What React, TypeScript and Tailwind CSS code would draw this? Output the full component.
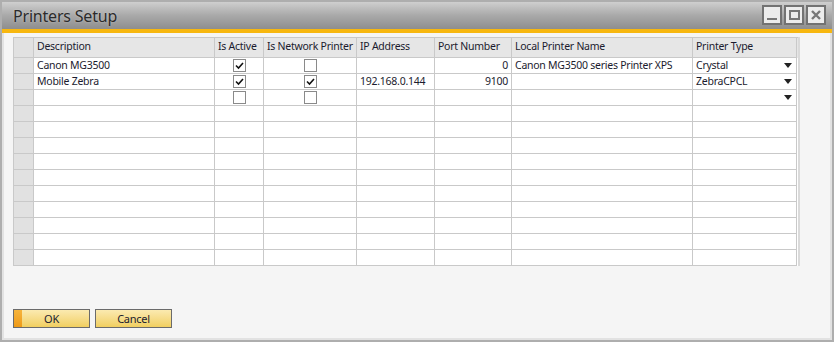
import React from "react";

type Row = {
  desc: string;
  active: boolean | null;
  network: boolean | null;
  ip: string;
  port: string;
  local: string;
  type: string;
  arrow: boolean;
};

const rows: Row[] = [
  { desc: "Canon MG3500", active: true, network: false, ip: "", port: "0", local: "Canon MG3500 series Printer XPS", type: "Crystal", arrow: true },
  { desc: "Mobile Zebra", active: true, network: true, ip: "192.168.0.144", port: "9100", local: "", type: "ZebraCPCL", arrow: true },
  { desc: "", active: false, network: false, ip: "", port: "", local: "", type: "", arrow: true },
];

const emptyRow: Row = { desc: "", active: null, network: null, ip: "", port: "", local: "", type: "", arrow: false };
const allRows: Row[] = [...rows, ...Array.from({ length: 10 }, () => emptyRow)];

const cols = "grid grid-cols-[20px_181px_49px_93px_78px_77px_181px_104px]";
const cell = "border-r border-b border-[#c9c9c9] h-4 leading-[15px] px-[3px] overflow-hidden whitespace-nowrap";

function Check({ on }: { on: boolean }) {
  return (
    <span className="inline-flex w-[13px] h-[13px] border border-[#8a8a8a] bg-white items-center justify-center align-middle">
      {on && (
        <svg width="9" height="8" viewBox="0 0 9 8">
          <path d="M1 3.5 L3.5 6 L8 1" fill="none" stroke="#111" strokeWidth="1.6" />
        </svg>
      )}
    </span>
  );
}

function Arrow() {
  return (
    <svg width="8" height="5" viewBox="0 0 8 5" className="shrink-0">
      <path d="M0 0 H8 L4 5 Z" fill="#222" />
    </svg>
  );
}

function WinBtn({ children }: { children: React.ReactNode }) {
  return (
    <div className="w-[20px] h-[20px] border-2 border-[#727272] bg-[#ececec] flex items-center justify-center">
      {children}
    </div>
  );
}

export default function App() {
  return (
    <div
      className="w-[834px] h-[342px] bg-[#aeaeae] p-[2px] text-[10.5px] tracking-[-0.25px] text-[#1b1b2e]"
      style={{ fontFamily: '"Noto Sans", "Open Sans", Arial, sans-serif' }}
    >
      <div className="w-full h-full flex flex-col bg-[#f5f5f5] border-l-2 border-r-2 border-b-2 border-[#e2e2e2]">
        {/* title bar */}
        <div className="h-[27px] -mx-[2px] bg-gradient-to-b from-[#cfcfcf] via-[#a9a9a9] to-[#8e8e8e] flex items-center justify-between pl-[11px] pr-[6px]">
          <span className="text-[16px] tracking-[-0.2px] text-[#2b2b2b] pt-[1px] [text-shadow:0_0_2px_rgba(255,255,255,0.4)]">
            Printers Setup
          </span>
          <div className="flex gap-[2px] -mt-[1px]">
            <WinBtn>
              <div className="w-[10px] h-[2px] bg-[#777] mt-[8px]" />
            </WinBtn>
            <WinBtn>
              <div className="w-[11px] h-[10px] border-2 border-[#777]" />
            </WinBtn>
            <WinBtn>
              <svg width="10" height="10" viewBox="0 0 10 10">
                <path d="M1 1 L9 9 M9 1 L1 9" stroke="#777" strokeWidth="2.4" />
              </svg>
            </WinBtn>
          </div>
        </div>
        <div className="h-[4px] -mx-[2px] bg-[#f7b70f]" />

        {/* grid */}
        <div className="ml-[9px] mt-[4px] w-[785px] border-l border-t border-[#c9c9c9] bg-white shadow-[2px_0_0_#dadada]">
          <div className={`${cols} bg-[#e6e6e6]`}>
            <div className="border-r border-b border-[#c9c9c9] h-5 bg-[#e1e1e1]" />
            {["Description", "Is Active", "Is Network Printer", "IP Address", "Port Number", "Local Printer Name", "Printer Type"].map((h) => (
              <div key={h} className="border-r border-b border-[#c9c9c9] h-5 leading-[16px] px-[3px] whitespace-nowrap overflow-hidden">
                {h}
              </div>
            ))}
          </div>
          {allRows.map((r, i) => (
            <div key={i} className={cols}>
              <div className={`${cell} bg-[#e1e1e1]`} />
              <div className={cell}>{r.desc}</div>
              <div className={`${cell} flex items-center justify-center`}>{r.active !== null && <Check on={r.active} />}</div>
              <div className={`${cell} flex items-center justify-center`}>{r.network !== null && <Check on={r.network} />}</div>
              <div className={cell}>{r.ip}</div>
              <div className={`${cell} text-right`}>{r.port}</div>
              <div className={cell}>{r.local}</div>
              <div className={`${cell} flex items-center justify-between pr-[4px]`}>
                <span>{r.type}</span>
                {r.arrow && <Arrow />}
              </div>
            </div>
          ))}
        </div>

        {/* buttons */}
        <div className="flex gap-[5px] ml-[9px] mt-auto mb-[10px]">
          <button className="relative w-[77px] h-[19px] border border-[#6b6b6b] bg-gradient-to-b from-[#fbeab0] to-[#f1cf5f] text-[11px] leading-[17px] text-[#1b1b2e] overflow-hidden">
            <span className="absolute left-0 top-0 bottom-0 w-[8px] bg-gradient-to-b from-[#f6b43c] to-[#ee9a14]" />
            OK
          </button>
          <button className="w-[77px] h-[19px] border border-[#6b6b6b] bg-gradient-to-b from-[#fbeab0] to-[#f1cf5f] text-[11px] leading-[17px] text-[#1b1b2e]">
            Cancel
          </button>
        </div>
      </div>
    </div>
  );
}
